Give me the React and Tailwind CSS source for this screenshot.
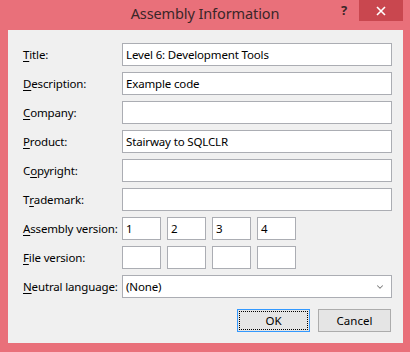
import { ChevronDown } from "lucide-react";

const font = { fontFamily: '"Noto Sans", "Open Sans", sans-serif' };

function Label({ pre = "", u, post }) {
  return (
    <div className="flex h-[23px] items-center whitespace-nowrap text-[11.5px] tracking-[-0.15px] text-black">
      {pre}
      <span className="underline underline-offset-2">{u}</span>
      {post}
    </div>
  );
}

function Field({ value = "", className = "" }) {
  return (
    <div
      className={
        "flex h-[23px] items-center whitespace-nowrap border border-[#abadb3] bg-white pl-[3px] text-[11.5px] tracking-[-0.15px] text-black " +
        className
      }
    >
      {value}
    </div>
  );
}

function VersionRow({ values }) {
  return (
    <div className="flex gap-[6px]">
      {values.map((v, i) => (
        <Field key={i} value={v} className="w-[39px]" />
      ))}
    </div>
  );
}

export default function App() {
  const rows = [
    { label: ["", "T", "itle:"], value: "Level 6: Development Tools" },
    { label: ["", "D", "escription:"], value: "Example code" },
    { label: ["", "C", "ompany:"], value: "" },
    { label: ["", "P", "roduct:"], value: "Stairway to SQLCLR" },
    { label: ["C", "o", "pyright:"], value: "" },
    { label: ["T", "r", "ademark:"], value: "" },
  ];

  return (
    <div className="flex h-[352px] w-[410px] flex-col bg-[#e9707a]" style={font}>
      <div className="relative flex h-[30px] items-center justify-center">
        <span className="pb-[2px] text-[14.5px] tracking-[-0.1px] text-[#3a2628]">Assembly Information</span>
        <div className="absolute right-[7px] top-0 flex">
          <div className="flex h-[21px] w-[30px] items-start justify-center pt-[1px] text-[13px] font-bold text-[#3a2628]">
            ?
          </div>
          <div className="flex h-[21px] w-[44px] items-center justify-center bg-[#c9474f]">
            <svg width="10" height="10" viewBox="0 0 10 10">
              <path d="M1 1 L9 9 M9 1 L1 9" stroke="#ffffff" strokeWidth="1.6" />
            </svg>
          </div>
        </div>
      </div>

      <div className="mb-[9px] ml-[8px] mr-[7px] flex flex-1 flex-col bg-[#f0f0f0] pb-[11px] pl-[15px] pr-[11px] pt-[13px]">
        <div className="grid grid-cols-[99px_1fr] gap-y-[6px]">
          {rows.map((r, i) => (
            <div key={i} className="contents">
              <Label pre={r.label[0]} u={r.label[1]} post={r.label[2]} />
              <Field value={r.value} />
            </div>
          ))}
          <Label u="A" post="ssembly version:" />
          <VersionRow values={["1", "2", "3", "4"]} />
          <Label u="F" post="ile version:" />
          <VersionRow values={["", "", "", ""]} />
          <Label u="N" post="eutral language:" />
          <div className="flex h-[23px] items-center justify-between border border-[#abadb3] bg-white pl-[3px] pr-[6px] text-[11.5px] tracking-[-0.15px] text-black">
            <span>(None)</span>
            <ChevronDown size={10} strokeWidth={2.5} className="text-[#7a7a7a]" />
          </div>
        </div>

        <div className="mt-auto flex justify-end gap-[8px] pr-[1px]">
          <div className="flex h-[23px] w-[73px] items-center justify-center border border-[#3399ff] bg-[#e5e5e5] p-[1px] text-[11.5px] text-black">
            <div className="flex h-full w-full items-center justify-center border border-dotted border-black">
              OK
            </div>
          </div>
          <div className="flex h-[23px] w-[73px] items-center justify-center border border-[#acacac] bg-[#e5e5e5] text-[11.5px] text-black">
            Cancel
          </div>
        </div>
      </div>
    </div>
  );
}
